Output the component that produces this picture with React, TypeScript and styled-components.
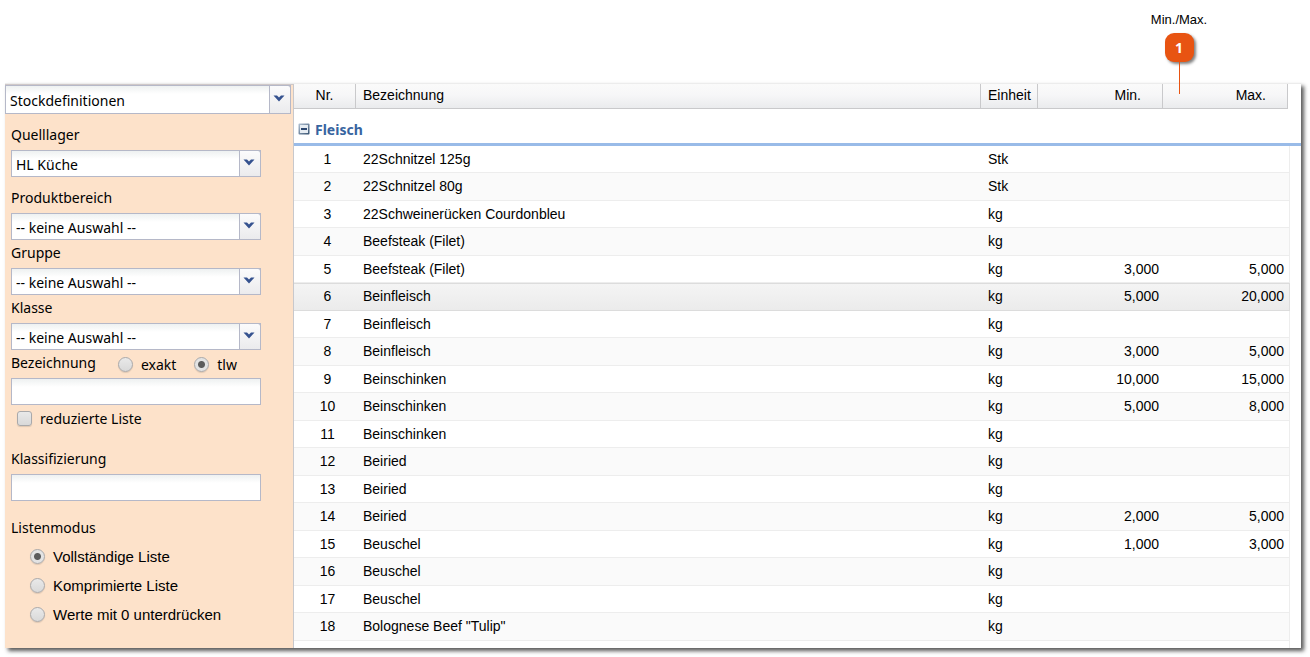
import React, { useState } from 'react';
import styled, { createGlobalStyle } from 'styled-components';

const ui = '"Noto Sans", Tahoma, sans-serif';
const grid = '"Liberation Sans", Arial, sans-serif';
const columns = '62px minmax(0, 1fr) 57px 125px 125px';

const GlobalStyle = createGlobalStyle`
  * { box-sizing: border-box; }
  body { margin: 0; background: #fff; color: #000; font: 14px ${grid}; }
`;

const Page = styled.div`
  display: flex;
  flex-direction: column;
  padding: 0 9px 9px 5px;
`;

const Callout = styled.div`
  align-self: flex-end;
  display: flex;
  flex-direction: column;
  align-items: center;
  width: 60px;
  height: 83px;
  margin-right: 92px;
  padding-top: 12px;
  z-index: 1;
`;

const CalloutText = styled.span`
  font-size: 13px;
  line-height: 16px;
  margin-bottom: 5px;
`;

const CalloutBadge = styled.span`
  flex: none;
  width: 29px;
  height: 29px;
  border-radius: 9px;
  background: #e85412;
  box-shadow: 2px 2px 3px rgba(0, 0, 0, 0.5);
  color: #fff;
  font: bold 14px/29px "Open Sans", sans-serif;
  text-align: center;
`;

const CalloutLine = styled.span`
  flex: none;
  width: 1px;
  height: 32px;
  background: #e85412;
`;

const Panel = styled.main`
  display: flex;
  border-top: 1px solid #ececec;
  background: #fff;
  box-shadow: 3px 3px 4px rgba(0, 0, 0, 0.65);
`;

const Sidebar = styled.form`
  flex: none;
  width: 289px;
  border-top: 1px solid #cfc8c8;
  border-right: 1px solid #c8c8cc;
  background: #fde2ca;
  padding-bottom: 19px;
  font-family: ${ui};
`;

const Fields = styled.div`
  padding: 8px 32px 0 6px;
`;

const Field = styled.div<{ $after?: number }>`
  margin-bottom: ${p => p.$after || 0}px;
`;

const Line = styled.div`
  display: flex;
  align-items: center;
  height: 28px;
`;

const Label = styled.label`
  display: block;
  padding-bottom: 2px;
  line-height: 26px;
`;

const Caption = styled.legend`
  padding: 0;
  line-height: 28px;
`;

const Combo = styled.div<{ $wide?: boolean }>`
  display: grid;
  grid-template-columns: minmax(0, 1fr) 22px;
  height: ${p => (p.$wide ? 29 : 27)}px;
  margin-right: ${p => (p.$wide ? 2 : 0)}px;
`;

const Select = styled.select`
  grid-area: 1 / 1 / 2 / 3;
  appearance: none;
  min-width: 0;
  border: 1px solid #b5b8c8;
  border-radius: 0;
  margin: 0;
  padding: 2px 24px 0 4px;
  background: linear-gradient(#eef1f1, #fff 8px);
  color: #000;
  font: 14px ${ui};
`;

const Arrow = styled.span`
  grid-area: 1 / 2;
  display: flex;
  align-items: center;
  justify-content: center;
  padding: 0 2px 2px 0;
  border: 1px solid #b5b8c8;
  border-top-right-radius: 3px;
  background: linear-gradient(#fbfbfc, #ebebed);
  pointer-events: none;
`;

const TextBox = styled.input`
  display: block;
  width: 100%;
  height: 27px;
  border: 1px solid #b5b8c8;
  padding: 0 4px;
  background: linear-gradient(#eef1f1, #fff 8px);
  font: 14px ${ui};
`;

const Choice = styled.label<{ $tall?: boolean }>`
  display: flex;
  align-items: center;
  gap: 8px;
  height: ${p => (p.$tall ? 29 : 26)}px;
`;

const Tick = styled.input`
  appearance: none;
  flex: none;
  width: 15px;
  height: 15px;
  margin: 0;
  border: 1px solid #a9a9ab;
  border-radius: ${p => (p.type === 'radio' ? '50%' : '3px')};
  background: linear-gradient(#e9e9e9, #d9d9d9);
  box-shadow: 0 1px 1px rgba(0, 0, 0, 0.12);
  &[type='radio']:checked {
    background: radial-gradient(circle, #5c5c5c 3px, #e3e3e3 4px);
  }
  &[type='checkbox']:checked { background: #5c5c5c; }
`;

const Match = styled.div`
  display: flex;
  gap: 18px;
  margin-left: 22px;
`;

const Reduced = styled.div`
  padding-left: 6px;
  margin-bottom: 15px;
`;

const Modes = styled.fieldset`
  border: 0;
  margin: 0;
  padding: 0;
`;

const ModeList = styled.div`
  padding-left: 19px;
  font: 15px ${grid};
`;

const TableArea = styled.section`
  flex: 1;
  min-width: 0;
  display: flex;
  flex-direction: column;
`;

const Table = styled.table`
  display: block;
  thead, tbody { display: block; }
`;

const HeadRow = styled.tr`
  display: grid;
  grid-template-columns: ${columns};
  padding-right: 13px;
`;

const Head = styled.th<{ $align?: string }>`
  height: 25px;
  padding: 0 ${p => (p.$align === 'right' ? 21 : 7)}px;
  border-right: 1px solid #c9c9cb;
  border-bottom: 1px solid #c9c9cb;
  background: linear-gradient(#fafafa, #f7f7f8 45%, #eaebed);
  font-weight: normal;
  line-height: 23px;
  text-align: ${p => p.$align || 'left'};
`;

const GroupRow = styled.tr`
  display: block;
  border-bottom: 3px solid #99bbe8;
`;

const GroupHead = styled.th`
  display: flex;
  align-items: center;
  gap: 5px;
  height: 34px;
  padding: 6px 4px 0;
  color: #3764a0;
  font: bold 14px ${ui};
`;

const Toggle = styled.button`
  display: flex;
  padding: 0;
  border: 0;
  background: none;
`;

const Row = styled.tr<{ $selected: boolean }>`
  display: grid;
  grid-template-columns: ${columns};
  height: 27px;
  margin-right: 11px;
  padding-right: 1px;
  border-right: 1px solid #ededed;
  border-bottom: 1px solid #ededed;
  line-height: 26px;
  &:nth-child(odd) {
    height: 28px;
    background: #fafafa;
  }
  && {
    ${p => p.$selected && `
      background: linear-gradient(#dcdcdc 1px, #f4f4f4 1px, #ebebeb);
      border-color: #dcdcdc;
    `}
  }
`;

const Cell = styled.td<{ $align?: string }>`
  padding: 0 ${p => (p.$align === 'right' ? 4 : 7)}px;
  text-align: ${p => p.$align || 'left'};
  white-space: nowrap;
`;

const NumberCell = styled(Cell)`
  padding: 0 0 0 5px;
  text-align: center;
`;

const Rest = styled.div`
  flex: 1;
  margin-right: 11px;
  border-right: 1px solid #ededed;
`;

const rows: [string, string, string?, string?][] = [
  ['22Schnitzel 125g', 'Stk'],
  ['22Schnitzel 80g', 'Stk'],
  ['22Schweinerücken Courdonbleu', 'kg'],
  ['Beefsteak (Filet)', 'kg'],
  ['Beefsteak (Filet)', 'kg', '3,000', '5,000'],
  ['Beinfleisch', 'kg', '5,000', '20,000'],
  ['Beinfleisch', 'kg'],
  ['Beinfleisch', 'kg', '3,000', '5,000'],
  ['Beinschinken', 'kg', '10,000', '15,000'],
  ['Beinschinken', 'kg', '5,000', '8,000'],
  ['Beinschinken', 'kg'],
  ['Beiried', 'kg'],
  ['Beiried', 'kg'],
  ['Beiried', 'kg', '2,000', '5,000'],
  ['Beuschel', 'kg', '1,000', '3,000'],
  ['Beuschel', 'kg'],
  ['Beuschel', 'kg'],
  ['Bolognese Beef "Tulip"', 'kg'],
];

const modes = ['Vollständige Liste', 'Komprimierte Liste', 'Werte mit 0 unterdrücken'];

function ComboBox({ id, value, wide }: { id: string; value: string; wide?: boolean }) {
  return (
    <Combo $wide={wide}>
      <Select id={id} aria-label={wide ? 'Ansicht' : undefined}>
        <option>{value}</option>
      </Select>
      <Arrow>
        <svg width="12" height="7" viewBox="0 0 12 7" aria-hidden="true">
          <path d="M0.500 0.500H4L6 2.500L8 0.500H11.500L6 6.500Z" fill="#35528f" />
        </svg>
      </Arrow>
    </Combo>
  );
}

export default function App() {
  const [selected, setSelected] = useState(5);
  return (
    <>
      <GlobalStyle />
      <Page>
        <Callout>
          <CalloutText>Min./Max.</CalloutText>
          <CalloutBadge>1</CalloutBadge>
          <CalloutLine />
        </Callout>
        <Panel>
          <Sidebar>
            <ComboBox id="view" value="Stockdefinitionen" wide />
            <Fields>
              <Field $after={8}>
                <Label htmlFor="source">Quelllager</Label>
                <ComboBox id="source" value="HL Küche" />
              </Field>
              <Field>
                <Label htmlFor="area">Produktbereich</Label>
                <ComboBox id="area" value="-- keine Auswahl --" />
              </Field>
              <Field>
                <Label htmlFor="group">Gruppe</Label>
                <ComboBox id="group" value="-- keine Auswahl --" />
              </Field>
              <Field>
                <Label htmlFor="class">Klasse</Label>
                <ComboBox id="class" value="-- keine Auswahl --" />
              </Field>
              <Field>
                <Line>
                  <Label htmlFor="name">Bezeichnung</Label>
                  <Match>
                    <Choice><Tick type="radio" name="match" />exakt</Choice>
                    <Choice><Tick type="radio" name="match" defaultChecked />tlw</Choice>
                  </Match>
                </Line>
                <TextBox id="name" />
              </Field>
              <Reduced>
                <Choice><Tick type="checkbox" />reduzierte Liste</Choice>
              </Reduced>
              <Field $after={13}>
                <Label htmlFor="classification">Klassifizierung</Label>
                <TextBox id="classification" />
              </Field>
              <Modes>
                <Caption>Listenmodus</Caption>
                <ModeList>
                  {modes.map((mode, i) => (
                    <Choice $tall key={mode}>
                      <Tick type="radio" name="mode" defaultChecked={i === 0} />
                      {mode}
                    </Choice>
                  ))}
                </ModeList>
              </Modes>
            </Fields>
          </Sidebar>
          <TableArea>
            <Table>
              <thead>
                <HeadRow>
                  <Head $align="center">Nr.</Head>
                  <Head>Bezeichnung</Head>
                  <Head>Einheit</Head>
                  <Head $align="right">Min.</Head>
                  <Head $align="right">Max.</Head>
                </HeadRow>
              </thead>
              <tbody>
                <GroupRow>
                  <GroupHead>
                    <Toggle type="button" aria-label="Gruppe einklappen">
                      <svg width="12" height="12" viewBox="0 0 12 12" aria-hidden="true">
                        <defs>
                          <linearGradient id="metal" x1="0" y1="0" x2="1" y2="1">
                            <stop offset="0" stopColor="#b4c3d4" />
                            <stop offset="1" stopColor="#34506f" />
                          </linearGradient>
                        </defs>
                        <rect x="0.500" y="0.500" width="11" height="11" rx="1" fill="url(#metal)" />
                        <rect x="2" y="2" width="8" height="8" fill="#e6ecf2" />
                        <path d="M3 6H9" stroke="#2c4770" strokeWidth="2" />
                      </svg>
                    </Toggle>
                    Fleisch
                  </GroupHead>
                </GroupRow>
                {rows.map(([name, unit, min, max], i) => (
                  <Row key={i} $selected={i === selected} onClick={() => setSelected(i)}>
                    <NumberCell>{i + 1}</NumberCell>
                    <Cell>{name}</Cell>
                    <Cell>{unit}</Cell>
                    <Cell $align="right">{min}</Cell>
                    <Cell $align="right">{max}</Cell>
                  </Row>
                ))}
              </tbody>
            </Table>
            <Rest />
          </TableArea>
        </Panel>
      </Page>
    </>
  );
}
